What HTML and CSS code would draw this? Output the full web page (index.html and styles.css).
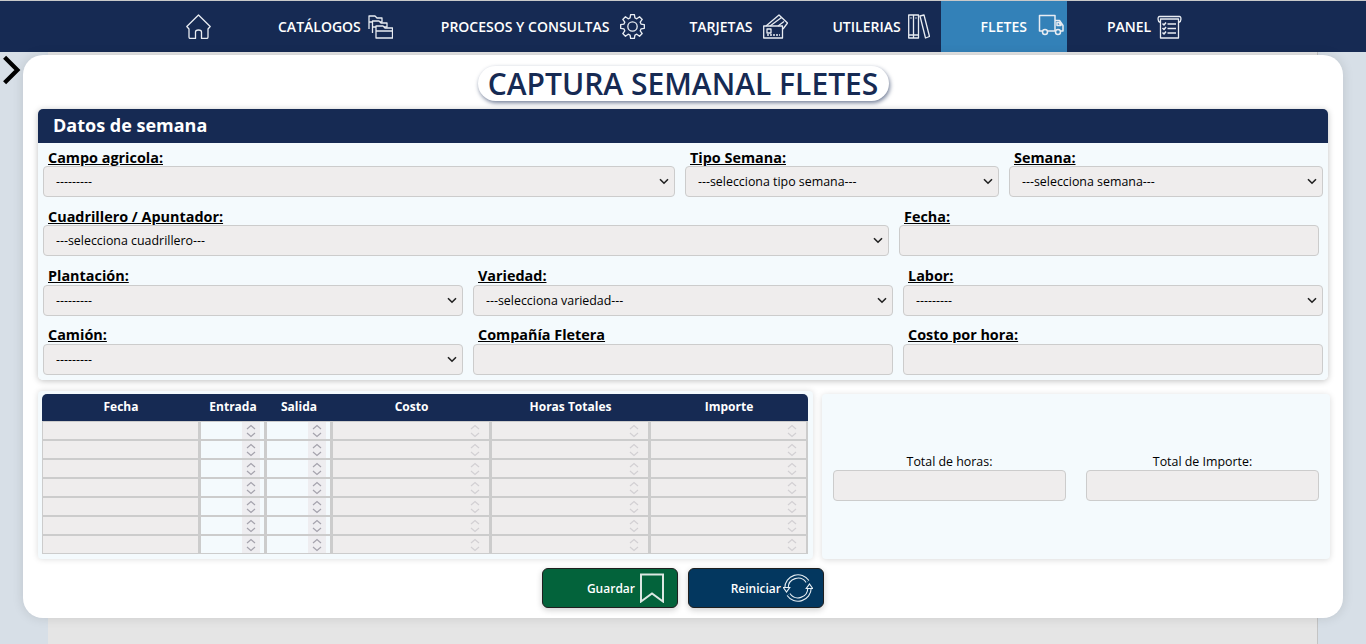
FILE: index.html
```html
<!DOCTYPE html>
<html lang="es">
<head>
<meta charset="UTF-8" />
<meta name="viewport" content="width=device-width, initial-scale=1.0"/>
<title>Captura semanal fletes</title>
<link rel="stylesheet" href="styles.css">
</head>
<body>

<nav class="topnav">
  <a class="nav-item nav-home" href="#">
    <svg class="nav-icon" viewBox="0 0 25 25"><path d="M12.5 1 .8 12.500 3 15V23C3 24 3.500 24.500 4.500 24.500H9.500V18C9.500 16.500 10.500 16 12.500 16S15.500 16.500 15.500 18V24.500H20.500C21.500 24.500 22 24 22 23V15L24.200 12.500Z"/></svg>
  </a>
  <a class="nav-item nav-catalog" href="#">CATÁLOGOS
    <svg class="nav-icon" viewBox="0 0 25 25"><path d="M1 15V2H7L9 4H14V8H1"/><path class="nav-fill" d="M4.500 19V7H11L13 9H19V13H4.500"/><path class="nav-fill" d="M8 12H15L17 14H24.500V24H8ZM8 17H24.500"/></svg>
  </a>
  <a class="nav-item nav-wide nav-process" href="#">PROCESOS Y CONSULTAS
    <svg class="nav-icon" viewBox="0 0 24 24"><path d="M9.660 3.830 10.200.640H13.800L14.340 3.830 16.120 4.570 18.760 2.690 21.310 5.240 19.430 7.880 20.170 9.660 23.360 10.200V13.800L20.170 14.340 19.430 16.120 21.310 18.760 18.760 21.310 16.120 19.430 14.340 20.170 13.800 23.360H10.200L9.660 20.170 7.880 19.430 5.240 21.310 2.690 18.760 4.570 16.120 3.830 14.340.640 13.800V10.200L3.830 9.660 4.570 7.880 2.690 5.240 5.240 2.690 7.880 4.570Z"/><circle cx="12" cy="12" r="4.500"/></svg>
  </a>
  <a class="nav-item nav-wide nav-cards" href="#">TARJETAS
    <svg class="nav-icon" viewBox="0 0 25 25"><path d="M3 12 16 1 24.500 9 20 15M7 12 18.500 3.500M15 12 21 7.500"/><path d="M.7 12H19.500V24H.7ZM4 15H8V19H4Z"/><path class="nav-dots" d="M4 21H17"/></svg>
  </a>
  <a class="nav-item nav-books" href="#">UTILERIAS
    <svg class="nav-icon nav-icon-narrow" viewBox="0 0 22 25"><path d="M.7 1H5.500V24H.7ZM5.500 1H10.500V24H5.500ZM12 2 16 1 21.500 22.500 17.500 24ZM.7 21H10.500M2.500 4H3.500M7.500 4H8.500"/></svg>
  </a>
  <a class="nav-item nav-wide nav-truck active" href="#">FLETES
    <svg class="nav-icon nav-icon-truck" viewBox="0 0 26 25"><path d="M4.500 17H1.500V1.500H17V17H9.500M17 6.500H21.500L25 11.500V17H22.500M17.500 17H17M19 8.500H21L23 11.500H19Z"/><circle cx="7" cy="18" r="2.500"/><circle cx="20" cy="18" r="2.500"/></svg>
  </a>
  <a class="nav-item nav-panel" href="#">PANEL
    <svg class="nav-icon" viewBox="0 0 25 25"><path d="M3 8.500C.5 7.500.5 2.500 2.500 2.500H22.500C24.500 2.500 24.500 7.500 22 8.500M3.500 5H21.500V24H3.500Z"/><path class="nav-check" d="M5.500 9.500 7 11 9 8.500M5.500 14 7 15.500 9 13M5.500 18.500 7 20 9 17.500"/><path class="nav-check" d="M10.500 10H19M10.500 14.500H19M10.500 19H19"/></svg>
  </a>
</nav>

<div class="backdrop">
  <svg class="side-toggle" viewBox="0 0 18 30"><path d="M3 3 15 15 3 27"/></svg>
</div>

<main class="modal">
  <h1 class="modal-title">CAPTURA SEMANAL FLETES</h1>

  <section class="panel">
    <h2 class="panel-header">Datos de semana</h2>
    <div class="panel-body">
      <div class="form-row row-a">
        <div class="field">
          <label>Campo agricola:</label>
          <select><option>---------</option></select>
        </div>
        <div class="field">
          <label>Tipo Semana:</label>
          <select><option>---selecciona tipo semana---</option></select>
        </div>
        <div class="field">
          <label>Semana:</label>
          <select><option>---selecciona semana---</option></select>
        </div>
      </div>
      <div class="form-row row-b">
        <div class="field">
          <label>Cuadrillero / Apuntador:</label>
          <select><option>---selecciona cuadrillero---</option></select>
        </div>
        <div class="field">
          <label>Fecha:</label>
          <input type="text" disabled>
        </div>
      </div>
      <div class="form-row row-c">
        <div class="field">
          <label>Plantación:</label>
          <select><option>---------</option></select>
        </div>
        <div class="field">
          <label>Variedad:</label>
          <select><option>---selecciona variedad---</option></select>
        </div>
        <div class="field">
          <label>Labor:</label>
          <select><option>---------</option></select>
        </div>
      </div>
      <div class="form-row row-c">
        <div class="field">
          <label>Camión:</label>
          <select><option>---------</option></select>
        </div>
        <div class="field">
          <label>Compañía Fletera</label>
          <input type="text" disabled>
        </div>
        <div class="field">
          <label>Costo por hora:</label>
          <input type="text" disabled>
        </div>
      </div>
    </div>
  </section>

  <div class="lower">
    <div class="table-card">
      <table class="hours-table">
        <thead>
          <tr>
            <th class="col-date">Fecha</th>
            <th class="col-time">Entrada</th>
            <th class="col-time">Salida</th>
            <th>Costo</th>
            <th>Horas Totales</th>
            <th class="col-last">Importe</th>
          </tr>
        </thead>
        <tbody>
          <tr><td><input type="text" disabled></td><td><input class="time" type="number"></td><td><input class="time" type="number"></td><td><input type="number" disabled></td><td><input type="number" disabled></td><td><input type="number" disabled></td></tr>
          <tr><td><input type="text" disabled></td><td><input class="time" type="number"></td><td><input class="time" type="number"></td><td><input type="number" disabled></td><td><input type="number" disabled></td><td><input type="number" disabled></td></tr>
          <tr><td><input type="text" disabled></td><td><input class="time" type="number"></td><td><input class="time" type="number"></td><td><input type="number" disabled></td><td><input type="number" disabled></td><td><input type="number" disabled></td></tr>
          <tr><td><input type="text" disabled></td><td><input class="time" type="number"></td><td><input class="time" type="number"></td><td><input type="number" disabled></td><td><input type="number" disabled></td><td><input type="number" disabled></td></tr>
          <tr><td><input type="text" disabled></td><td><input class="time" type="number"></td><td><input class="time" type="number"></td><td><input type="number" disabled></td><td><input type="number" disabled></td><td><input type="number" disabled></td></tr>
          <tr><td><input type="text" disabled></td><td><input class="time" type="number"></td><td><input class="time" type="number"></td><td><input type="number" disabled></td><td><input type="number" disabled></td><td><input type="number" disabled></td></tr>
          <tr><td><input type="text" disabled></td><td><input class="time" type="number"></td><td><input class="time" type="number"></td><td><input type="number" disabled></td><td><input type="number" disabled></td><td><input type="number" disabled></td></tr>
        </tbody>
      </table>
    </div>

    <div class="totals-card">
      <div class="total">
        <label>Total de horas:</label>
        <input type="text" disabled>
      </div>
      <div class="total">
        <label>Total de Importe:</label>
        <input type="text" disabled>
      </div>
    </div>
  </div>

  <div class="actions">
    <button class="btn btn-save">Guardar
      <svg class="btn-icon" viewBox="0 0 24 30"><path d="M1 1.500H23V28.500L12 20.500 1 28.500Z"/></svg>
    </button>
    <button class="btn btn-reset">Reiniciar
      <svg class="btn-icon btn-icon-sync" viewBox="0 0 30 30">
        <path class="sync-band" d="M3.500 15A11.500 11.500 0 0 1 24.500 8.500M26.500 15A11.500 11.500 0 0 1 5.500 21.500"/>
        <path class="sync-core" d="M3.500 15A11.500 11.500 0 0 1 24.500 8.500M26.500 15A11.500 11.500 0 0 1 5.500 21.500"/>
        <path class="sync-head" d="M.3 14.500H6.700L3.500 19ZM23.300 15.500H29.700L26.500 11Z"/>
      </svg>
    </button>
  </div>
</main>

</body>
</html>
```

FILE: styles.css
```css
* {
  box-sizing: border-box;
}

html, body {
  height: 100%;
}

body {
  margin: 0;
  display: flex;
  flex-direction: column;
  overflow: hidden;
  font-family: "Open Sans", sans-serif;
  background-color: #d7dfe7;
  color: #000;
}

/* top menu */
.topnav {
  display: flex;
  flex: 0 0 52px;
  padding-left: 146px;
  background-color: #162a53;
  border-top: 1px solid #c9c9c9;
}

.nav-item {
  display: flex;
  align-items: center;
  gap: 7px;
  padding: 0 2px 0 40px;
  color: #fff;
  font-size: 14px;
  font-weight: 600;
  text-decoration: none;
  white-space: nowrap;
}

.nav-wide {
  gap: 11px;
}

.nav-home {
  margin-right: 25px;
}

.nav-catalog {
  margin-right: 6px;
}

.nav-process {
  margin-right: 2px;
}

.nav-cards {
  margin-right: 2px;
}

.nav-books {
  margin-right: 9px;
}

.nav-truck {
  padding-right: 3px;
}

.nav-panel {
  gap: 6px;
}

.nav-item.active {
  background-color: #3381b8;
}

.nav-icon {
  width: 25px;
  height: 25px;
  fill: none;
  stroke: #e8ecf2;
  stroke-width: 1.3;
  stroke-linejoin: round;
}

.nav-icon-narrow {
  width: 22px;
}

.nav-icon-truck {
  width: 26px;
  stroke-width: 1.5;
}

.nav-fill {
  fill: #162a53;
}

.nav-dots {
  stroke-dasharray: 2 1;
}

.nav-check {
  stroke-width: 1.5;
}

/* grey page behind the modal */
.backdrop {
  flex: 1;
  margin: 0 48px;
  background-color: #e5e5e5;
  border-right: 1px solid #c4c4c4;
}

.side-toggle {
  position: absolute;
  left: 1px;
  top: 54px;
  width: 20px;
  height: 32px;
  fill: none;
  stroke: #000;
  stroke-width: 4;
}

.modal {
  position: absolute;
  left: 23px;
  top: 55px;
  width: 1320px;
  height: 563px;
  padding: 11px 15px;
  background-color: #fff;
  border-radius: 20px;
  box-shadow: 0 0 12px rgba(0, 0, 0, 0.12);
}

.modal-title {
  width: 411px;
  height: 35px;
  margin: 0 auto 8px;
  background-color: #fff;
  border-radius: 18px;
  box-shadow: 1px 2px 4px rgba(22, 42, 83, 0.6);
  color: #162a53;
  font-size: 30px;
  font-weight: 600;
  line-height: 36px;
  text-align: center;
  white-space: nowrap;
}

.panel {
  border-radius: 5px;
  box-shadow: 0 1px 6px rgba(0, 0, 0, 0.25);
}

.panel-header {
  height: 34px;
  margin: 0;
  padding-left: 15px;
  background-color: #162a53;
  border-radius: 5px 5px 0 0;
  color: #fff;
  font-size: 18px;
  font-weight: 700;
  line-height: 33px;
}

.panel-body {
  height: 237px;
  padding: 6px 5px 0;
  background-color: #f4fafd;
  border-radius: 0 0 5px 5px;
}

.form-row {
  display: grid;
  gap: 10px;
  margin-bottom: 12px;
}

.row-a {
  grid-template-columns: 632px 314px 314px;
  margin-bottom: 11px;
}

.row-b {
  grid-template-columns: 846px 420px;
  margin-bottom: 12px;
}

.row-c {
  grid-template-columns: 420px 420px 420px;
  margin-bottom: 11px;
}

.field label {
  display: block;
  height: 17px;
  padding-left: 5px;
  font-size: 14.4px;
  font-weight: 700;
  line-height: 17px;
  text-decoration: underline;
  white-space: nowrap;
}

.row-c .field label {
  line-height: 15px;
}

select, .field input, .total input {
  display: block;
  width: 100%;
  height: 31px;
  background-color: #efeded;
  border: 1px solid #ccc;
  border-radius: 4px;
  font-family: "Open Sans", sans-serif;
  font-size: 12.4px;
}

select {
  padding-left: 12px;
  color: #000;
  appearance: none;
  background-image: url("data:image/svg+xml,%3Csvg xmlns='http://www.w3.org/2000/svg' width='10' height='7'%3E%3Cpath d='M1 1.200 5 5.200 9 1.200' fill='none' stroke='%23222' stroke-width='1.600'/%3E%3C/svg%3E");
  background-repeat: no-repeat;
  background-position: right 5px center;
}

.lower {
  display: flex;
  align-items: flex-start;
  gap: 9px;
  width: 1292px;
  margin-top: 11px;
}

.table-card {
  width: 775px;
  height: 168px;
  padding: 3px 5px 4px 4px;
  background-color: #f4fafd;
  border-radius: 4px;
  box-shadow: 0 0 6px rgba(0, 0, 0, 0.15);
}

.hours-table {
  width: 766px;
  table-layout: fixed;
  border-collapse: collapse;
}

.hours-table th {
  width: 159px;
  height: 27px;
  padding: 0 0 2px;
  background-color: #162a53;
  color: #fff;
  font-size: 12px;
  font-weight: 700;
}

.hours-table th.col-date {
  width: 158px;
  border-top-left-radius: 5px;
}

.hours-table th.col-last {
  width: 158px;
  border-top-right-radius: 5px;
}

.hours-table th.col-time {
  width: 66px;
}

.hours-table td {
  height: 19px;
  padding: 0;
}

.hours-table input {
  display: block;
  width: 100%;
  height: 19px;
  padding: 0 1px;
  border: 1px solid #ccc;
  border-width: 1px 2px 1px 1px;
  outline: none;
  background-color: #efeded;
}

/* spinner is drawn on the input so it also shows when not hovered */
.hours-table input[type="number"] {
  background-image: url("data:image/svg+xml,%3Csvg xmlns='http://www.w3.org/2000/svg' width='10' height='14'%3E%3Cpath d='M1 5 5 1.500 9 5M1 9 5 12.500 9 9' fill='none' stroke='%23d2d0d3' stroke-width='1.200'/%3E%3C/svg%3E");
  background-repeat: no-repeat;
  background-position: right 9px center;
}

.hours-table input.time {
  background-image: url("data:image/svg+xml,%3Csvg xmlns='http://www.w3.org/2000/svg' width='10' height='14'%3E%3Cpath d='M1 5 5 1.500 9 5M1 9 5 12.500 9 9' fill='none' stroke='%23a5a3ad' stroke-width='1.200'/%3E%3C/svg%3E"), linear-gradient(#eeedf0, #eeedf0);
  background-size: auto, 18px 100%;
  background-position: right 8px center, right 4px center;
  background-color: #f4fafd;
}

.hours-table input::-webkit-inner-spin-button {
  appearance: none;
}

.totals-card {
  display: flex;
  align-items: flex-start;
  gap: 20px;
  width: 508px;
  height: 165px;
  margin-top: 3px;
  padding: 60px 11px 0 11px;
  background-color: #f4fafd;
  border-radius: 4px;
  box-shadow: 0 1px 6px rgba(0, 0, 0, 0.15);
}

.total {
  flex: 1;
}

.total label {
  display: block;
  height: 16px;
  font-size: 12.4px;
  line-height: 16px;
  text-align: center;
}

.actions {
  display: flex;
  justify-content: center;
  gap: 10px;
  margin-top: 9px;
}

.btn {
  display: flex;
  align-items: center;
  justify-content: flex-end;
  gap: 5px;
  width: 136px;
  height: 40px;
  padding: 0 13px 0 0;
  border: 1px solid #1f1f1f;
  border-radius: 6px;
  box-shadow: 0 2px 6px rgba(0, 0, 0, 0.2);
  color: #fff;
  font-family: "Open Sans", sans-serif;
  font-size: 12px;
  font-weight: 600;
}

.btn-save {
  background-color: #03633b;
}

.btn-reset {
  gap: 2px;
  padding-right: 10px;
  background-color: #03375f;
}

.btn-icon {
  width: 24px;
  height: 30px;
  fill: none;
  stroke: #dce8e2;
  stroke-width: 2;
}

.btn-icon-sync {
  width: 30px;
}

.sync-band {
  stroke: #e6eef4;
  stroke-width: 4.500;
}

.sync-core {
  stroke: #03375f;
  stroke-width: 2.300;
}

.sync-head {
  fill: #03375f;
  stroke: #e6eef4;
  stroke-width: 1.200;
}
```
